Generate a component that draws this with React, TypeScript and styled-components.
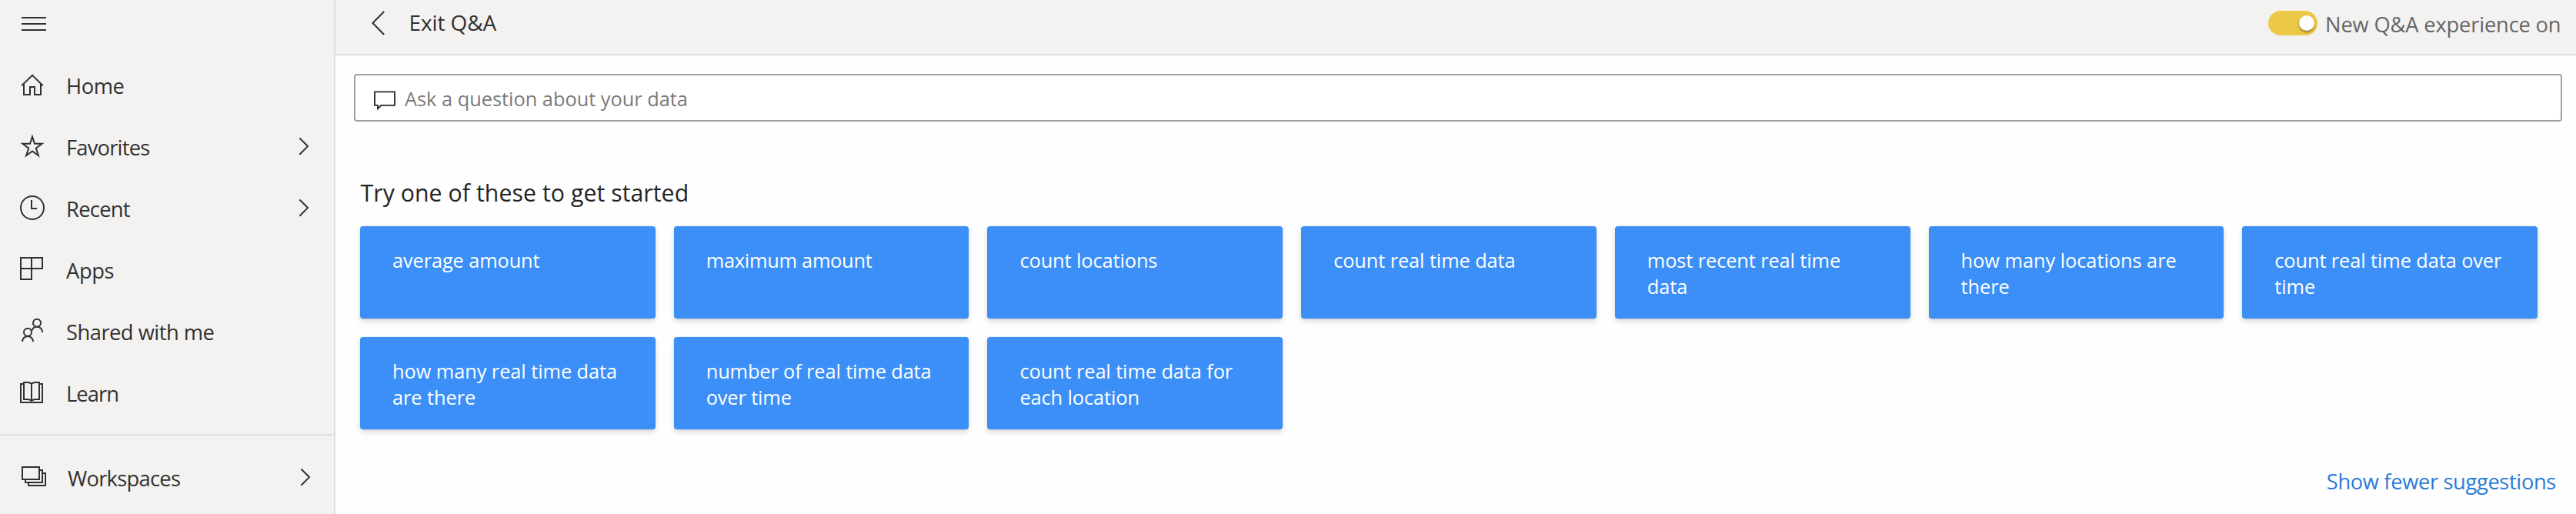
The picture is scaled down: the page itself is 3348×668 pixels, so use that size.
import React from 'react';
import styled, { createGlobalStyle } from 'styled-components';

const GlobalStyle = createGlobalStyle`
  * { box-sizing: border-box; }
  body {
    margin: 0;
    background: #fefefe;
    color: #323130;
    font-family: "Open Sans", "Noto Sans", sans-serif;
  }
  button {
    margin: 0;
    padding: 0;
    border: 0;
    background: none;
    color: inherit;
    font: inherit;
    text-align: left;
  }
`;

const Page = styled.div`
  display: flex;
  height: 668px;
  overflow: hidden;
`;

const Sidebar = styled.aside`
  flex: none;
  width: 436px;
  background: #f3f2f1;
  border-right: 2px solid #e1dfdd;
`;

const MenuButton = styled.button`
  display: block;
  height: 72px;
  padding: 22px 28px 32px;

  svg { display: block; }
`;

const NavRow = styled.button<{ $inset?: number }>`
  display: flex;
  align-items: center;
  width: 100%;
  height: 80px;
  padding-left: ${(p) => 24 + (p.$inset ?? 0)}px;
  padding-right: ${(p) => 32 - (p.$inset ?? 0)}px;
`;

const NavLabel = styled.span<{ $tracking: number }>`
  flex: 1;
  height: 38px;
  margin-left: 26px;
  font-size: 27.3px;
  line-height: 37px;
  letter-spacing: ${(p) => p.$tracking}px;
  white-space: nowrap;
`;

const ChevronSlot = styled.span`
  display: flex;
  padding-bottom: 4px;
`;

const WorkspaceSection = styled.div`
  margin-top: 12px;
  padding-top: 16px;
  border-top: 2px solid #e1dfdd;
`;

const Main = styled.main`
  flex: 1;
  min-width: 0;
  display: flex;
  flex-direction: column;
`;

const Header = styled.header`
  display: flex;
  align-items: center;
  justify-content: space-between;
  height: 72px;
  padding: 0 0 12px 46px;
  background: #f3f2f1;
  border-bottom: 2px solid #e1dfdd;
`;

const ExitButton = styled.button`
  display: flex;
  align-items: center;
  gap: 29.5px;
  height: 38px;
  font-size: 28px;
  line-height: 38px;
  letter-spacing: -0.1px;
  white-space: nowrap;

  svg { flex: none; }
`;

const ExperienceSwitch = styled.label`
  display: flex;
  align-items: center;
  gap: 10px;
  width: 400px;
`;

const ToggleTrack = styled.span`
  display: flex;
  flex: none;
  align-items: center;
  justify-content: flex-end;
  width: 64px;
  height: 32px;
  margin-top: 2px;
  padding-right: 4px;
  border-radius: 16px;
  background: #ebc845;
`;

const ToggleKnob = styled.span`
  width: 20px;
  height: 20px;
  border-radius: 50%;
  background: #fff;
  box-shadow: 0 2px 3px rgba(0, 0, 0, 0.4);
`;

const SwitchLabel = styled.span`
  padding-top: 5px;
  color: #666;
  font-size: 27.3px;
  line-height: 37px;
  letter-spacing: -0.17px;
  white-space: nowrap;
`;

const Content = styled.div`
  padding: 24px 18px 0 24px;
`;

const QuestionBox = styled.div`
  display: flex;
  align-items: center;
  gap: 10px;
  height: 62px;
  padding-left: 22px;
  border: 2px solid #a0a0a0;
  border-radius: 4px;
  background: #fff;
`;

const Placeholder = styled.span`
  padding-top: 2px;
  color: #7a7a7a;
  font-size: 25.35px;
  line-height: 34px;
  letter-spacing: 0;
`;

const Title = styled.h2`
  margin: 72px 0 23px 8.5px;
  color: #252423;
  font-size: 30.22px;
  font-weight: 400;
  line-height: 41px;
  letter-spacing: 0.07px;
`;

const Suggestions = styled.div`
  display: grid;
  grid-template-columns: repeat(7, 1fr);
  grid-auto-rows: 120px;
  gap: 24px;
  margin: 0 32px 0 8px;
`;

const SuggestionCard = styled.button<{ $tracking: number }>`
  display: flex;
  align-items: flex-start;
  padding: 27px 36px 0 42px;
  border-radius: 4px;
  background: #3c8ff7;
  box-shadow: 0 3.2px 7.2px rgba(0, 0, 0, 0.13), 0 0.6px 1.8px rgba(0, 0, 0, 0.11);
  color: #fff;
  font-size: 25.35px;
  line-height: 34px;
  letter-spacing: ${(p) => p.$tracking}px;
`;

const Footer = styled.div`
  display: flex;
  justify-content: flex-end;
  margin-top: 49px;
  padding-right: 8px;
`;

const FewerLink = styled.a`
  color: #2b7cd3;
  font-size: 27.3px;
  line-height: 37px;
  letter-spacing: -0.36px;
`;

const Glyph = ({ children }: { children: React.ReactNode }) => (
  <svg width="36" height="36" viewBox="0 0 36 36" fill="none" stroke="#323130" strokeWidth="2" strokeMiterlimit="10">
    {children}
  </svg>
);

const Chevron = () => (
  <ChevronSlot>
    <svg width="14" height="26" viewBox="0 0 14 26" fill="none" stroke="#323130" strokeWidth="2">
      <path d="M1.4 2.5 12 13.1 1.4 23.8" />
    </svg>
  </ChevronSlot>
);

interface NavItem {
  label: string;
  tracking: number;
  expandable?: boolean;
  icon: React.ReactNode;
}

const navItems: NavItem[] = [
  { label: 'Home', tracking: -0.4, icon: <path d="M4.2 17.2 18 3.8 31.8 17.2M7 15V29H15V19H21V29H29V15" /> },
  {
    label: 'Favorites',
    tracking: -0.78,
    expandable: true,
    icon: (
      <path d="M18 3.6 20.96 12.72H30.55L22.79 18.6 25.9 28.2 18 22.4 10.1 28.2 13.21 18.6 5.45 12.72H15.04Z" />
    ),
  },
  {
    label: 'Recent',
    tracking: -0.7,
    expandable: true,
    icon: (
      <>
        <circle cx="18" cy="16" r="15" />
        <path d="M17 6V17H24" />
      </>
    ),
  },
  { label: 'Apps', tracking: -0.38, icon: <path d="M3 1H31V15H3ZM17 1V29H3V1" /> },
  {
    label: 'Shared with me',
    tracking: -0.5,
    icon: (
      <>
        <circle cx="24" cy="5.8" r="5" />
        <circle cx="12" cy="17.8" r="5" />
        <path d="M31 18A7 7 0 0 0 17.3 15.6M5 30A7 7 0 0 1 19 30" />
      </>
    ),
  },
  {
    label: 'Learn',
    tracking: -0.9,
    icon: <path d="M7 5H3V29H31V5H27M7 3H12Q15 3 17 4.8Q19 3 22 3H27V25H22Q19 25 17 26.8Q15 25 12 25H7ZM17 4.8V27" />,
  },
];

const suggestions: [string, number][] = [
  ['average amount', -0.1],
  ['maximum amount', -0.24],
  ['count locations', -0.09],
  ['count real time data', -0.09],
  ['most recent real time data', -0.1],
  ['how many locations are there', -0.03],
  ['count real time data over time', -0.09],
  ['how many real time data are there', -0.06],
  ['number of real time data over time', -0.12],
  ['count real time data for each location', -0.09],
];

export default function App() {
  return (
    <>
      <GlobalStyle />
      <Page>
        <Sidebar>
          <MenuButton aria-label="Toggle navigation">
            <svg width="32" height="18" viewBox="0 0 32 18" stroke="#323130" strokeWidth="2">
              <path d="M0 1H32M0 9H32M0 17H32" />
            </svg>
          </MenuButton>
          <nav>
            {navItems.map((item) => (
              <NavRow key={item.label}>
                <Glyph>{item.icon}</Glyph>
                <NavLabel $tracking={item.tracking}>{item.label}</NavLabel>
                {item.expandable && <Chevron />}
              </NavRow>
            ))}
          </nav>
          <WorkspaceSection>
            <NavRow $inset={2}>
              <Glyph>
                <path d="M3 3H25V19H3ZM25 7H29V23H7V19M29 11H33V27H11V23" />
              </Glyph>
              <NavLabel $tracking={-0.72}>Workspaces</NavLabel>
              <Chevron />
            </NavRow>
          </WorkspaceSection>
        </Sidebar>
        <Main>
          <Header>
            <ExitButton>
              <svg width="20" height="38" viewBox="0 0 20 38" fill="none" stroke="#323130" strokeWidth="2">
                <path d="M17.2 5 2.4 20 17.2 35" />
              </svg>
              Exit Q&amp;A
            </ExitButton>
            <ExperienceSwitch>
              <ToggleTrack>
                <ToggleKnob />
              </ToggleTrack>
              <SwitchLabel>New Q&amp;A experience on</SwitchLabel>
            </ExperienceSwitch>
          </Header>
          <Content>
            <QuestionBox>
              <svg width="32" height="36" viewBox="0 0 32 36" fill="none" stroke="#252423" strokeWidth="1.8">
                <path d="M3 10.3H29V27.8H11.5L7 32.4V27.8H3Z" />
              </svg>
              <Placeholder>Ask a question about your data</Placeholder>
            </QuestionBox>
            <Title>Try one of these to get started</Title>
            <Suggestions>
              {suggestions.map(([text, tracking]) => (
                <SuggestionCard key={text} $tracking={tracking}>
                  {text}
                </SuggestionCard>
              ))}
            </Suggestions>
            <Footer>
              <FewerLink>Show fewer suggestions</FewerLink>
            </Footer>
          </Content>
        </Main>
      </Page>
    </>
  );
}
